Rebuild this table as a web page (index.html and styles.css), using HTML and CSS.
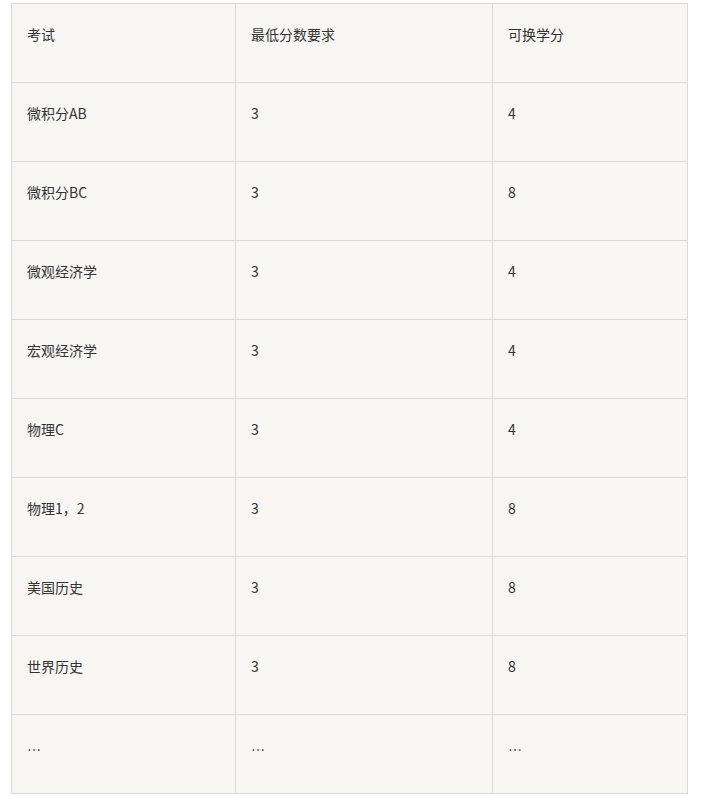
FILE: index.html
```html
<!DOCTYPE html>
<html lang="zh-CN">
<head>
<meta charset="utf-8">
<link rel="stylesheet" href="styles.css">
</head>
<body>
<div class="wrap">
<table class="grid">
<colgroup><col class="c1"><col class="c2"><col class="c3"></colgroup>
<tbody>
<tr><td>考试</td><td>最低分数要求</td><td>可换学分</td></tr>
<tr><td>微积分AB</td><td>3</td><td>4</td></tr>
<tr><td>微积分BC</td><td>3</td><td>8</td></tr>
<tr><td>微观经济学</td><td>3</td><td>4</td></tr>
<tr><td>宏观经济学</td><td>3</td><td>4</td></tr>
<tr><td>物理C</td><td>3</td><td>4</td></tr>
<tr><td>物理1，2</td><td>3</td><td>8</td></tr>
<tr><td>美国历史</td><td>3</td><td>8</td></tr>
<tr><td>世界历史</td><td>3</td><td>8</td></tr>
<tr><td class="dots">…</td><td class="dots">…</td><td class="dots">…</td></tr>
</tbody>
</table>
</div>
</body>
</html>
```
FILE: styles.css
```css
html, body { margin: 0; padding: 0; background: #ffffff; }
.wrap { padding: 3px 0 0 11px; }
.grid {
  border-collapse: collapse;
  table-layout: fixed;
  width: 676px;
  background: #f7f6f3;
  font-family: "Noto Sans CJK SC", "Noto Sans", sans-serif;
  font-size: 14px;
  color: #333333;
}
.c1 { width: 224px; }
.c2 { width: 257px; }
.c3 { width: 195px; }
.grid td {
  border: 1px solid #d9d9d9;
  height: 79px;
  box-sizing: border-box;
  padding: 19px 15px 0 15px;
  vertical-align: top;
  line-height: 22px;
}
.grid td.dots { padding-top: 23px; }
```
